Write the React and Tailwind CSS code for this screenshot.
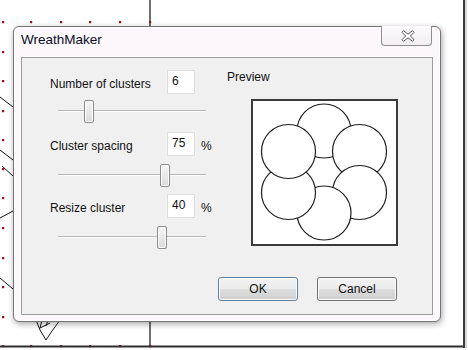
import React from "react";

const XS = [3, 31, 61, 90, 120, 150];
const YS = [22, 52, 81, 111, 140, 169, 198, 228, 258, 287, 317, 346];

function Backdrop() {
  return (
    <svg className="absolute inset-0" width="468" height="350" viewBox="0 0 468 350">
      <line x1="150" y1="0" x2="150" y2="346" stroke="#222" strokeWidth="1.3" />
      <g stroke="#111" strokeWidth="1" fill="none">
        <path d="M0 97 L13 107" />
        <path d="M0 150 L13 160" />
        <path d="M2 166 L13 176" />
        <path d="M0 218 L13 211" />
        <path d="M0 278 L13 289" />
        <path d="M36 320 L40 330 L46 340 L52 331 L60 320" />
        <path d="M42 320 L40 328 L50 323" />
        <path d="M48 320 L46 326" />
      </g>
      {XS.map((x) =>
        YS.map((y) => <rect key={x + "-" + y} x={x - 1} y={y - 1} width="2.2" height="2.2" fill="#9b1010" />)
      )}
      <line x1="0" y1="346.5" x2="465" y2="346.5" stroke="#2e2e2e" strokeWidth="2" />
      <line x1="464" y1="0" x2="464" y2="348" stroke="#3a3a3a" strokeWidth="2" />
      <line x1="466" y1="0" x2="466" y2="348" stroke="#c8c8c8" strokeWidth="1.5" />
    </svg>
  );
}

function CloseGlyph() {
  return (
    <svg width="14" height="12" viewBox="0 0 14 12">
      <path
        d="M1 2.3 L2.6 0.7 L7 4.2 L11.4 0.7 L13 2.3 L9.3 6 L13 9.7 L11.4 11.3 L7 7.8 L2.6 11.3 L1 9.7 L4.7 6 Z"
        fill="#ffffff"
        stroke="#4e4e4e"
        strokeWidth="1"
        strokeLinejoin="round"
      />
    </svg>
  );
}

function Slider({ pos }) {
  return (
    <div className="relative ml-[8px] h-[23px] w-[148px]">
      <div className="absolute left-0 right-0 top-[10px] h-[2px] border-t border-[#b8b8b8] border-b border-b-white" />
      <div
        className="absolute top-0 h-[23px] w-[10px] rounded-[2px] border border-[#8c8c8c] bg-[linear-gradient(#f7f7f7,#dadada)] shadow-[inset_0_0_0_1px_#fdfdfd]"
        style={{ left: pos }}
      />
    </div>
  );
}

function Row({ label, value, percent, className }) {
  return (
    <div className={"flex h-[24px] " + className}>
      <div className="w-[117px] pt-[7px] text-[12px] leading-[14px] text-[#111]">{label}</div>
      <div className="h-[24px] w-[28px] border border-[#dedede] bg-white pl-[4px] pt-[3px] text-[12px] leading-[14px] text-[#111]">
        {value}
      </div>
      {percent && <div className="ml-[6px] pt-[7px] text-[12px] leading-[14px] text-[#111]">%</div>}
    </div>
  );
}

function Wreath() {
  const cx = 71;
  const cy = 71;
  const R = 41;
  const r = 27;
  const angles = [-90, -30, 30, 90, 150, 210];
  return (
    <svg width="143" height="143" viewBox="0 0 143 143">
      {angles.map((a) => {
        const t = (a * Math.PI) / 180;
        return (
          <circle
            key={a}
            cx={cx + R * Math.cos(t)}
            cy={cy + R * Math.sin(t)}
            r={r}
            fill="#fff"
            stroke="#1e1e1e"
            strokeWidth="1.2"
          />
        );
      })}
    </svg>
  );
}

function WinButton({ children, def }) {
  return (
    <div
      className={
        "flex h-[24px] w-[80px] items-center justify-center rounded-[3px] border bg-[linear-gradient(#f3f3f3_0%,#ebebeb_48%,#dddddd_52%,#cfcfcf_100%)] text-[12px] leading-[14px] text-[#111] shadow-[inset_0_0_0_1px_#fbfbfb] " +
        (def ? "border-[#5f7f9c]" : "border-[#707070]")
      }
    >
      {children}
    </div>
  );
}

export default function App() {
  return (
    <div className="relative h-[350px] w-[468px] overflow-hidden bg-white font-['Liberation_Sans',Arial,sans-serif]">
      <Backdrop />
      <div className="absolute left-[13px] top-[26px] flex h-[296px] w-[428px] flex-col rounded-[6px] border border-[#747474] bg-[#fbf7fb] shadow-[1px_2px_6px_rgba(0,0,0,0.35),inset_0_0_0_1px_rgba(255,255,255,0.9)]">
        <div className="flex h-[30px] justify-between pl-[7px] pr-[8px]">
          <div className="pt-[5px] text-[13.5px] leading-[16px] text-[#0c0c24]">WreathMaker</div>
          <div className="-mt-px flex h-[20px] w-[51px] items-center justify-center rounded-b-[4px] border border-t-0 border-[#8e8e8e] bg-[linear-gradient(#fdfbfd,#f1eef1)] pl-[2px]">
            <CloseGlyph />
          </div>
        </div>
        <div className="mx-[7px] flex h-[258px] w-[412px] border border-[#9c9c9c] bg-[#f0f0f0] shadow-[0_0_0_1px_#fdfdfd]">
          <div className="flex w-[196px] flex-col pl-[28px]">
            <Row className="mt-[12px]" label="Number of clusters" value="6" />
            <div className="mt-[6px]">
              <Slider pos={26} />
            </div>
            <Row className="mt-[9px]" label="Cluster spacing" value="75" percent />
            <div className="mt-[8px]">
              <Slider pos={102} />
            </div>
            <Row className="mt-[7px]" label="Resize cluster" value="40" percent />
            <div className="mt-[8px]">
              <Slider pos={99} />
            </div>
          </div>
          <div className="flex flex-col">
            <div className="ml-[9px] mt-[12px] text-[12px] leading-[14px] text-[#111]">Preview</div>
            <div className="ml-[33px] mt-[15px] h-[147px] w-[147px] border-2 border-[#3a3a3a] bg-white">
              <Wreath />
            </div>
            <div className="mt-[31px] flex gap-[19px]">
              <WinButton def>OK</WinButton>
              <WinButton>Cancel</WinButton>
            </div>
          </div>
        </div>
      </div>
    </div>
  );
}
